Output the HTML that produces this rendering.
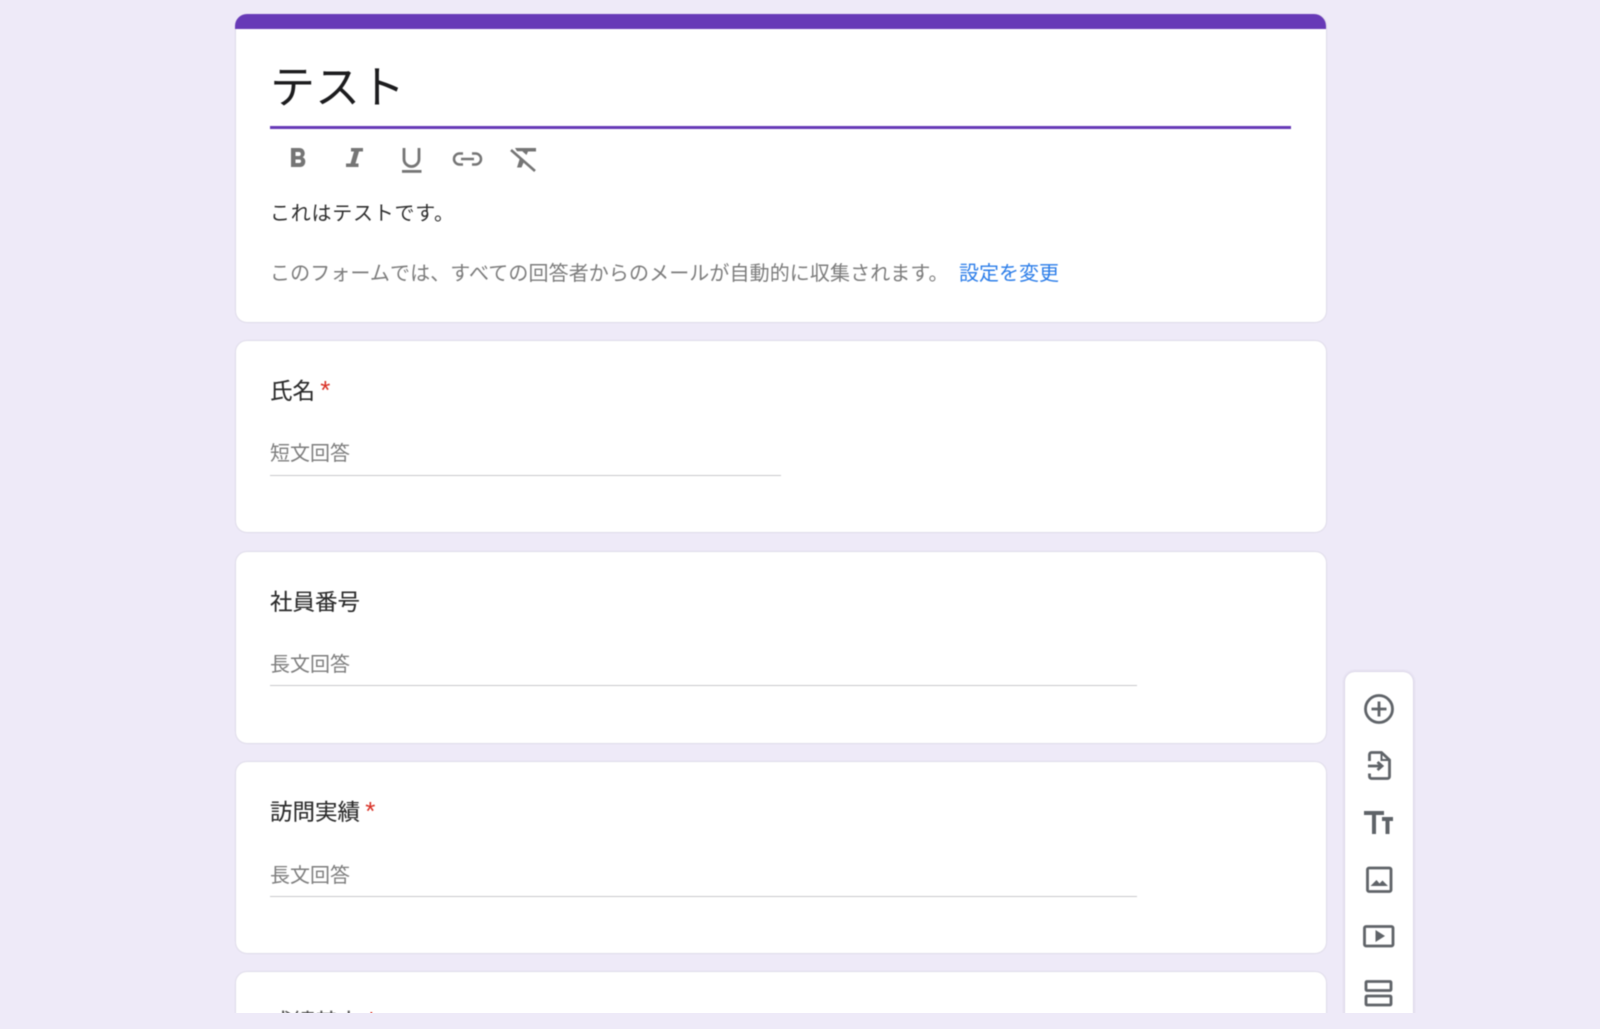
<!DOCTYPE html>
<html lang="ja"><head><meta charset="utf-8"><title>テスト</title>
<style>
html,body{margin:0;padding:0;width:1600px;height:1029px;overflow:hidden;background:#eeeaf8}
body{font-family:"Liberation Sans","Noto Sans CJK JP",sans-serif;position:relative}
#clip{position:absolute;left:0;top:0;width:1600px;height:1013px;overflow:hidden}
#in{position:absolute;left:0;top:0;width:1600px;height:1040px;filter:blur(.55px)}
.card{position:absolute;left:235px;width:1090px;background:#fff;border:1px solid #dfdce9;border-radius:12px;box-sizing:content-box}
.t{position:absolute;white-space:nowrap;line-height:1}
.line{position:absolute;left:270px;height:1px;background:#c9c9cb}
.q{font-size:22.500px;color:#2a2a2a;left:270px;-webkit-text-stroke:.12px #2a2a2a}
.p{font-size:20px;color:#7d7d7d;left:270px}
.req{color:#d93025;font-size:26px;-webkit-text-stroke:0;line-height:0}
svg{position:absolute;fill:none}
</style></head><body>
<div id="clip"><div id="in">
<div class="card" style="top:14px;height:307px"></div>
<div style="position:absolute;left:235px;top:14px;width:1091px;height:14.500px;background:#673ab7;border-radius:12px 12px 0 0"></div>
<div class="t" style="left:270px;top:65px;font-size:45px;color:#1c1c1e">テスト</div>
<div style="position:absolute;left:270px;top:126px;width:1021px;height:3px;background:#673ab7"></div>

<svg style="left:285px;top:145px" width="260" height="30" viewBox="0 0 260 30">
<path d="M6 3h8.500a5.200 5.200 0 0 1 3.300 9.200A5.300 5.300 0 0 1 15.500 22H6zM10.500 7v4h3.300a2 2 0 0 0 0-4zM10.500 14.500V18h4.200a1.800 1.800 0 0 0 0-3.500z" fill="#757575" fill-rule="evenodd"/>
<path d="M66 3h12v3.500h-4l-3.500 12h3V22H61v-3.500h4.500l3.500-12h-3z" fill="#757575"/>
<path d="M119 3v11a7.500 7.500 0 0 0 15 0V3" stroke="#757575" stroke-width="2.800"/><rect x="117" y="25" width="19.500" height="2.800" fill="#757575"/>
<path d="M178 8.500h-3.500a5.500 5.500 0 0 0 0 11h3.500M187 8.500h3.500a5.500 5.500 0 0 1 0 11H187M176 14h13" stroke="#757575" stroke-width="2.500"/>
<path d="M227 5l24 21" stroke="#757575" stroke-width="2.600" transform="translate(-1 0)"/><path d="M230 3h21v3.500h-8l-1.500 3.500-4-3.500.5-.3h-6zM235 13l4 3.500-2.500 6h-4.500z" fill="#757575"/>
</svg>

<div class="t" style="left:270px;top:203.500px;font-size:20px;letter-spacing:.75px;color:#2f2f2f">これはテストです。</div>
<div class="t" style="left:270px;top:264px;font-size:20px;letter-spacing:.1px;color:#7c7c7c">このフォームでは、すべての回答者からのメールが自動的に収集されます。</div>
<div class="t" style="left:959px;top:264px;font-size:20px;color:#2b7de9">設定を変更</div>

<div class="card" style="top:340px;height:191px"></div>
<div class="t q" style="top:381px">氏名 <span class="req" style="position:relative;top:0;margin-left:-1px">*</span></div>
<div class="t p" style="top:444px">短文回答</div>
<div class="line" style="top:475px;width:511px"></div>

<div class="card" style="top:551px;height:191px"></div>
<div class="t q" style="top:591.500px">社員番号</div>
<div class="t p" style="top:655px">長文回答</div>
<div class="line" style="top:685px;width:867px"></div>

<div class="card" style="top:761px;height:191px"></div>
<div class="t q" style="top:802px">訪問実績 <span class="req" style="position:relative;top:0;margin-left:-1px">*</span></div>
<div class="t p" style="top:866px">長文回答</div>
<div class="line" style="top:896px;width:867px"></div>

<div class="card" style="top:971px;height:191px"></div>
<div class="t q" style="top:1012px;left:270px;color:#555">成績基本 <span class="req">*</span></div>

<div style="position:absolute;left:1345px;top:672px;width:68px;height:400px;background:#fff;border-radius:10px;box-shadow:0 0 3px rgba(90,80,120,.28)"></div>
<svg style="left:1345px;top:672px" width="68" height="345" viewBox="0 0 68 345" stroke="#5f6368" stroke-width="2.800">
<circle cx="34" cy="37" r="13.500"/><path d="M34 29.500v15M26.500 37h15"/>
<path d="M24.500 89v-6.500a2 2 0 0 1 2-2h10l8 7.500v16.500a2 2 0 0 1-2 2h-16a2 2 0 0 1-2-2v-3"/>
<path d="M36.500 81v7h8" stroke-width="2"/>
<path d="M23 94h14M32.500 90l4.500 4-4.500 4"/>
<path d="M19 141h20M29 141v21M37 147h11M42.500 147v15" stroke-width="4"/>
<rect x="22.500" y="196" width="23.500" height="23.500" rx="1.500"/><path d="M25.500 214l6-6 3 3.500 3-3 5.500 5.500z" fill="#5f6368" stroke="none"/>
<rect x="19.500" y="254.500" width="28.500" height="19.500" rx="1.500"/><path d="M30.500 258l9.500 6-9.500 6z" fill="#5f6368" stroke="none"/>
<rect x="21" y="309.500" width="25" height="9" rx="1"/><rect x="21" y="324" width="25" height="9" rx="1"/>
</svg>
</div></div>
</body></html>
